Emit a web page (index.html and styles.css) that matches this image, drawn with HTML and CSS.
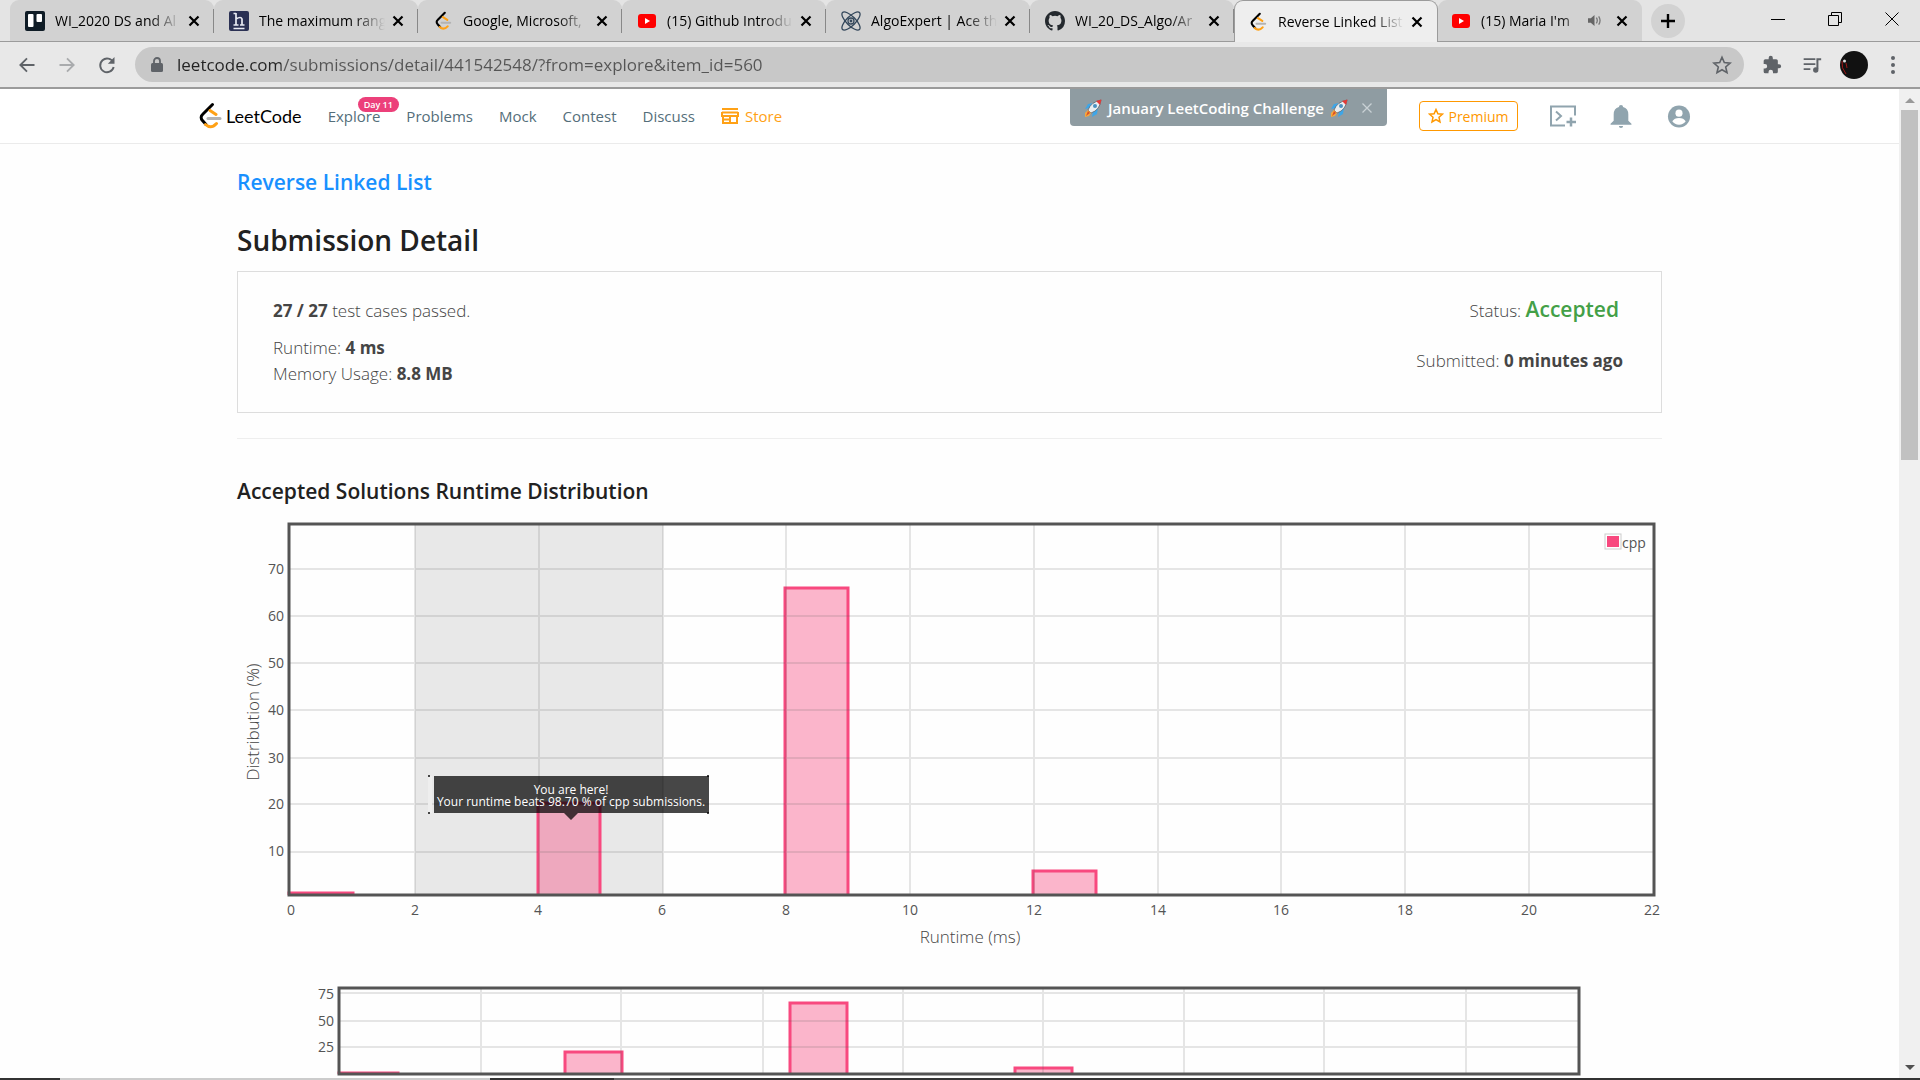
FILE: index.html
```html
<!DOCTYPE html>
<html lang="en">
<head>
<meta charset="utf-8">
<title>Reverse Linked List - Submission Detail - LeetCode</title>
<link rel="stylesheet" href="styles.css">
</head>
<body>
<svg class="defs" aria-hidden="true">
  <symbol id="x" viewBox="0 0 12 12"><path d="M1.5 1.5l9 9M10.500 1.500l-9 9" stroke="currentColor" stroke-width="2.200" fill="none"/></symbol>
  <symbol id="leet" viewBox="0 0 24 28">
    <path d="M14.500 2.500L4.500 12.500a4 4 0 0 0 0 6l3.500 4" fill="none" stroke="#000" stroke-width="3" stroke-linecap="round"/>
    <path d="M12 8.500l6 4M7.500 22.500q5.500 5 11-1" fill="none" stroke="#ffa116" stroke-width="3" stroke-linecap="round"/>
    <path d="M10 16.500h12" stroke="#b3b3b3" stroke-width="3" stroke-linecap="round"/>
  </symbol>
  <symbol id="yt" viewBox="0 0 20 20"><rect x="1" y="3" width="18" height="14" rx="3" fill="#f00"/><path d="M8 7v6l5-3z" fill="#fff"/></symbol>
  <symbol id="rocket" viewBox="0 0 20 20">
    <path d="M6 10l-4 1 3-5 5-1zM10 14l-1 5 5-3 1-6z" fill="#3ea6e8"/>
    <path d="M5 12Q8 4 18 2 17 12 8 15z" fill="#e9edf0" stroke="#5c6670" stroke-width=".8"/>
    <path d="M13 3l5.500-1.500L17 7z" fill="#e53935"/><circle cx="12" cy="8" r="2" fill="#4a90c0"/>
    <path d="M5 12l-3 3v4l4-1 2-3z" fill="#f7a83a"/><path d="M5 13l-2 5 4-3z" fill="#d84e2a"/>
  </symbol>
</svg>

<header class="browser">
  <div class="tabs">
    <div class="tab">
      <svg class="fav" viewBox="0 0 20 20"><rect width="20" height="20" rx="2" fill="#0f1c26"/><rect x="3" y="3" width="5.500" height="13" rx="1" fill="#fff"/><rect x="11.500" y="3" width="5.500" height="8" rx="1" fill="#fff"/></svg>
      <span class="tab-title">WI_2020 DS and Al</span><button class="close" aria-label="Close tab"><svg><use href="#x"/></svg></button>
    </div>
    <div class="tab">
      <svg class="fav" viewBox="0 0 20 20"><rect width="20" height="20" rx="2" fill="#2b3154"/><path d="M7 2v12M4.500 2.500H7M4.500 14h5M7 8q5-3 6 0v6M11 14h4.500M4.500 17.500h11" fill="none" stroke="#e8eaf2" stroke-width="1.700"/></svg>
      <span class="tab-title">The maximum rang</span><button class="close" aria-label="Close tab"><svg><use href="#x"/></svg></button>
    </div>
    <div class="tab">
      <svg class="fav"><use href="#leet"/></svg>
      <span class="tab-title">Google, Microsoft,</span><button class="close" aria-label="Close tab"><svg><use href="#x"/></svg></button>
    </div>
    <div class="tab">
      <svg class="fav"><use href="#yt"/></svg>
      <span class="tab-title">(15) Github Introdu</span><button class="close" aria-label="Close tab"><svg><use href="#x"/></svg></button>
    </div>
    <div class="tab">
      <svg class="fav" viewBox="0 0 20 20" fill="none" stroke="#33475b" stroke-width="1.300"><ellipse cx="10" cy="10" rx="12" ry="4.500" transform="rotate(45 10 10)"/><ellipse cx="10" cy="10" rx="12" ry="4.500" transform="rotate(-45 10 10)"/><circle cx="10" cy="10" r="3"/><circle cx="10" cy="10" r=".8"/></svg>
      <span class="tab-title">AlgoExpert | Ace th</span><button class="close" aria-label="Close tab"><svg><use href="#x"/></svg></button>
    </div>
    <div class="tab">
      <svg class="fav" viewBox="0 0 16 16"><path fill="#24292e" d="M8 0C3.580 0 0 3.580 0 8c0 3.540 2.290 6.530 5.470 7.590.4.070.55-.17.55-.38 0-.19-.01-.82-.01-1.490-2.010.37-2.530-.49-2.690-.94-.09-.23-.48-.94-.82-1.130-.28-.15-.68-.52-.01-.53.63-.01 1.080.58 1.230.82.72 1.210 1.870.87 2.330.66.070-.52.28-.87.51-1.070-1.780-.2-3.640-.89-3.640-3.950 0-.87.31-1.590.82-2.150-.08-.2-.36-1.020.08-2.120 0 0 .67-.21 2.200.82a7.600 7.600 0 0 1 4 0c1.530-1.040 2.200-.82 2.200-.82.44 1.100.16 1.920.08 2.120.51.56.82 1.270.82 2.150 0 3.070-1.870 3.750-3.650 3.950.29.25.54.73.54 1.480 0 1.070-.01 1.930-.01 2.200 0 .21.15.46.55.38A8.010 8.010 0 0 0 16 8c0-4.420-3.580-8-8-8z"/></svg>
      <span class="tab-title">WI_20_DS_Algo/Ar</span><button class="close" aria-label="Close tab"><svg><use href="#x"/></svg></button>
    </div>
    <div class="tab active">
      <svg class="fav"><use href="#leet"/></svg>
      <span class="tab-title">Reverse Linked List</span><button class="close" aria-label="Close tab"><svg><use href="#x"/></svg></button>
    </div>
    <div class="tab last">
      <svg class="fav"><use href="#yt"/></svg>
      <span class="tab-title">(15) Maria I'm</span>
      <svg class="sound" viewBox="0 0 14 14"><path d="M0 4.500h3l4-3.500v12L3 9.500H0z" fill="#666"/><path d="M9 4q2 3 0 6M11.500 2.500q3 4.500 0 9" fill="none" stroke="#777" stroke-width="1.400"/></svg>
      <button class="close" aria-label="Close tab"><svg><use href="#x"/></svg></button>
    </div>
    <button class="new-tab" aria-label="New tab"><svg viewBox="0 0 16 16"><path d="M8 1v14M1 8h14" stroke="#000" stroke-width="2.400"/></svg></button>
    <div class="window-buttons">
      <button aria-label="Minimize"><svg viewBox="0 0 14 14"><path d="M0 7.500h14" stroke="#000"/></svg></button>
      <button aria-label="Restore"><svg viewBox="0 0 14 14" fill="none" stroke="#000"><path d="M.5 3.500h10v10h-10zM3.500 3.500v-3h10v10h-3"/></svg></button>
      <button aria-label="Close"><svg viewBox="0 0 14 14"><path d="M.5.5l13 13M13.500.5l-13 13" stroke="#000"/></svg></button>
    </div>
  </div>
  <div class="toolbar">
    <button aria-label="Back"><svg viewBox="0 0 24 24"><path d="M21 12H5M12 4l-8 8 8 8" fill="none" stroke="#5f6368" stroke-width="2.200"/></svg></button>
    <button aria-label="Forward"><svg viewBox="0 0 24 24"><path d="M3 12h16M12 4l8 8-8 8" fill="none" stroke="#a9abad" stroke-width="2.200"/></svg></button>
    <button aria-label="Reload"><svg viewBox="0 0 24 24"><path d="M19.500 9A8.200 8.200 0 1 0 20 14.500" fill="none" stroke="#5f6368" stroke-width="2.300"/><path d="M21 2.500v8h-8z" fill="#5f6368"/></svg></button>
    <div class="omnibox">
      <svg class="lock" viewBox="0 0 12 16"><path d="M3 7V4a3 3 0 0 1 6 0v3" fill="none" stroke="#5f6368" stroke-width="1.800"/><rect y="6" width="12" height="9" rx="1.500" fill="#5f6368"/></svg>
      <input class="url" type="text" aria-label="Address" value="leetcode.com/submissions/detail/441542548/?from=explore&amp;item_id=560">
      <button class="bookmark" aria-label="Bookmark this page"><svg viewBox="0 0 20 20"><path d="M10 2.200l2.300 5.400 5.800.5-4.400 3.900 1.300 5.700-5-3-5 3 1.300-5.700L1.900 8.100l5.800-.5z" fill="none" stroke="#5f6368" stroke-width="1.600"/></svg></button>
    </div>
    <button class="ext" aria-label="Extensions"><svg viewBox="0 0 24 24"><path fill="#5f6368" d="M20.500 11H19V7a2 2 0 0 0-2-2h-4V3.500a2.500 2.500 0 0 0-5 0V5H4a2 2 0 0 0-2 2v3.800h1.500a2.700 2.700 0 0 1 0 5.400H2V20a2 2 0 0 0 2 2h3.800v-1.500a2.700 2.700 0 0 1 5.400 0V22H17a2 2 0 0 0 2-2v-4h1.500a2.500 2.500 0 0 0 0-5z"/></svg></button>
    <button class="ext" aria-label="Media"><svg viewBox="0 0 24 24"><path d="M2 5h14M2 11h14M2 17h8" stroke="#5f6368" stroke-width="2.200"/><path d="M18.500 17V5H23" stroke="#5f6368" stroke-width="2.400" fill="none"/><circle cx="16.500" cy="18" r="3.200" fill="#5f6368"/></svg></button>
    <button class="avatar" aria-label="Profile"><svg viewBox="0 0 28 28"><circle cx="14" cy="14" r="14" fill="#111"/><path d="M2 10q-1 7 4 13M6 12l1 5" stroke="#a01515" fill="none"/><circle cx="4.500" cy="10" r="1.500" fill="#ddd"/></svg></button>
    <button class="menu" aria-label="Menu"><svg viewBox="0 0 6 20" fill="#5f6368"><circle cx="3" cy="3" r="2"/><circle cx="3" cy="10" r="2"/><circle cx="3" cy="17" r="2"/></svg></button>
  </div>
</header>

<div class="viewport">
  <div class="page">
    <nav class="nav">
      <a class="logo" href="#"><svg><use href="#leet"/></svg>LeetCode</a>
      <a class="explore" href="#">Explore<span class="badge">Day 11</span></a>
      <a href="#">Problems</a>
      <a href="#">Mock</a>
      <a href="#">Contest</a>
      <a href="#">Discuss</a>
      <a class="store" href="#"><svg viewBox="0 0 18 16" fill="none" stroke="#ffa116" stroke-width="2"><path d="M1 1h16M1 4.500h16M1 4v4h16V4M2 8v7h14V8M2 11.500h7M9 8v7"/></svg>Store</a>
      <div class="user">
        <button class="premium"><svg viewBox="0 0 16 16"><path d="M8 1.500l1.900 4.300 4.600.4-3.500 3.100 1 4.600L8 11.500l-4 2.400 1-4.600L1.500 6.200l4.600-.4z" fill="none" stroke="#ff9800" stroke-width="1.500"/></svg>Premium</button>
        <button class="nav-icon" aria-label="Playground"><svg viewBox="0 0 26 22" fill="none" stroke="#90a4ae" stroke-width="2"><path d="M15 20H1V1h24v9M6 6l5 4.500L6 15"/><path d="M21 12v9M16.500 16.500h9.500" stroke-width="2.500"/></svg></button>
        <button class="nav-icon" aria-label="Notifications"><svg viewBox="0 0 20 22" fill="#90a4ae"><path d="M10 0a2 2 0 0 1 2 2q5 1.500 5 7v6l3 3v1H0v-1l3-3V9q0-5.500 5-7a2 2 0 0 1 2-2zM8 20h4a2 2 0 0 1-4 0z"/></svg></button>
        <button class="nav-icon" aria-label="Account"><svg viewBox="0 0 24 24"><circle cx="12" cy="12" r="11.500" fill="#90a4ae"/><circle cx="12" cy="8.500" r="3.700" fill="#fff"/><path d="M5 17q2-3.500 7-3.500t7 3.500q-2.500 3.500-7 3.500T5 17z" fill="#fff"/></svg></button>
      </div>
      <div class="banner"><svg class="rocket"><use href="#rocket"/></svg><span>January LeetCoding Challenge</span><svg class="rocket"><use href="#rocket"/></svg><button aria-label="Dismiss"><svg viewBox="0 0 12 12"><path d="M1.500 1.500l9 9M10.500 1.500l-9 9" stroke="#c9d1d5" stroke-width="1.300"/></svg></button></div>
    </nav>

    <main class="content">
      <h2 class="problem"><a href="#">Reverse Linked List</a></h2>
      <h1 class="title">Submission Detail</h1>
      <section class="summary">
        <div>
          <p class="cases"><b>27 / 27</b> test cases passed.</p>
          <p>Runtime: <b>4 ms</b></p>
          <p>Memory Usage: <b>8.8 MB</b></p>
        </div>
        <div class="right">
          <p class="status">Status: <strong>Accepted</strong></p>
          <p>Submitted: <b>0 minutes ago</b></p>
        </div>
      </section>
      <hr>
      <h3 class="chart-title">Accepted Solutions Runtime Distribution</h3>
      <svg class="chart" viewBox="0 0 1425 435" role="img" aria-label="Runtime distribution">
        <rect x="178" y="9" width="248" height="371" fill="#e8e8e8"/>
        <g class="bars">
          <path d="M52 380v-2h64v2"/><path d="M301 380v-92h62v92"/><path d="M548 380V73h63v307"/><path d="M796 380v-24h63v24"/>
        </g>
        <path class="grid" d="M178 9v371M302 9v371M426 9v371M549 9v371M673 9v371M797 9v371M921 9v371M1044 9v371M1168 9v371M1292 9v371M52 54h1364M52 101h1364M52 148h1364M52 195h1364M52 243h1364M52 289h1364M52 337h1364"/>
        <rect class="frame" x="52" y="9" width="1365" height="371"/>
        <g class="tick end">
          <text x="47" y="59">70</text><text x="47" y="106">60</text><text x="47" y="153">50</text><text x="47" y="200">40</text><text x="47" y="248">30</text><text x="47" y="294">20</text><text x="47" y="341">10</text>
        </g>
        <g class="tick mid">
          <text x="54" y="400">0</text><text x="178" y="400">2</text><text x="301" y="400">4</text><text x="425" y="400">6</text><text x="549" y="400">8</text><text x="673" y="400">10</text><text x="797" y="400">12</text><text x="921" y="400">14</text><text x="1044" y="400">16</text><text x="1168" y="400">18</text><text x="1292" y="400">20</text><text x="1415" y="400">22</text>
        </g>
        <text class="axis" x="733" y="428">Runtime (ms)</text>
        <text class="axis" transform="translate(22 207) rotate(-90)">Distribution (%)</text>
        <rect x="1368" y="19" width="16" height="15" fill="#fff" stroke="#ccc"/><rect x="1370" y="21" width="12" height="11" fill="#f8497f"/>
        <text class="tick" x="1385" y="33">cpp</text>
        <path d="M191 261h4v37h-4z" fill="#eee"/>
        <path d="M191 261h2M191 298h2M470 261h2M470 298h2" stroke="#444" stroke-width="2"/>
        <path d="M197 261h275v37H341l-7 7-7-7H197z" fill="#000" fill-opacity=".72"/>
        <g class="tip"><text x="334" y="279">You are here!</text><text x="334" y="291">Your runtime beats 98.70 % of cpp submissions.</text></g>
      </svg>
      <svg class="chart overview" viewBox="0 0 1425 110" role="img" aria-label="Runtime overview">
        <g class="bars">
          <path d="M102 99v-1h59v1"/><path d="M328 99V77h57v22"/><path d="M553 99V28h57v71"/><path d="M778 99v-6h57v6"/>
        </g>
        <path class="grid" d="M244 13v86M384 13v86M526 13v86M666 13v86M806 13v86M947 13v86M1087 13v86M1229 13v86M102 18h1240M102 46h1240M102 72h1240"/>
        <rect class="frame" x="102" y="13" width="1240" height="86"/>
        <g class="tick end"><text x="97" y="24">75</text><text x="97" y="51">50</text><text x="97" y="77">25</text></g>
      </svg>
    </main>
  </div>
  <div class="scrollbar"><i class="up"></i><div class="thumb"></div><i class="down"></i></div>
</div>
<footer class="taskbar"><div class="search"></div><div class="task"></div></footer>
</body>
</html>
```
FILE: styles.css
```css
* { box-sizing: border-box; }
body {
  margin: 0;
  height: 100vh;
  display: flex;
  flex-direction: column;
  overflow: hidden;
  background: #fefefe;
  color: #454545;
  font-family: "Open Sans", "Noto Sans", sans-serif;
  font-size: 17px;
}
button { border: 0; padding: 0; background: none; font: inherit; display: flex; align-items: center; justify-content: center; flex: none; }
a { color: inherit; text-decoration: none; }
h1, h2, h3, p { margin: 0; font-weight: 600; }
svg { display: block; flex: none; }
.defs { position: absolute; width: 0; height: 0; }

/* browser chrome */
.browser { flex: none; border-bottom: 2px solid #9b9b9b; background: #e8e8e8; }
.tabs { display: flex; align-items: center; height: 42px; padding-left: 10px; border-bottom: 1px solid #9b9b9b; background: #e4e4e4; }
.tab {
  flex: 0 1 204px;
  min-width: 0;
  height: 41px;
  display: flex;
  align-items: center;
  gap: 10px;
  padding: 0 9px 0 15px;
  border-radius: 9px 9px 0 0;
  background: linear-gradient(90deg, #888, #888) right center / 1px 24px no-repeat #d2d2d2;
  color: #000;
  font-size: 14px;
}
.tab.active { height: 42px; background: #eee; border: 1px solid #9b9b9b; border-bottom: 0; align-self: flex-start; padding-left: 13px; }
.tab.last { background: #d2d2d2; padding-left: 13px; }
.fav { width: 20px; height: 20px; }
.tab-title { flex: 1; min-width: 0; margin-right: -8px; overflow: hidden; white-space: nowrap; mask-image: linear-gradient(90deg, #000 75%, transparent); }
.close { width: 22px; height: 22px; color: #000; }
.close svg { width: 12px; height: 12px; }
.sound { width: 13px; height: 13px; }
.new-tab { width: 34px; height: 34px; margin-left: 9px; border-radius: 50%; background: #d2d2d2; }
.new-tab svg { width: 16px; height: 16px; }
.window-buttons { margin-left: auto; display: flex; align-self: flex-start; }
.window-buttons button { width: 57px; height: 37px; }
.window-buttons svg { width: 14px; height: 14px; }
.toolbar { display: flex; align-items: center; height: 45px; padding: 0 18px 0 15px; gap: 16px; }
.toolbar svg { width: 20px; height: 20px; }
.toolbar > button { width: 24px; height: 24px; }
.omnibox { flex: 1; display: flex; align-items: center; height: 35px; padding: 0 12px 0 16px; border-radius: 18px; background: #c8c8c8; }
.omnibox .lock { width: 12px; height: 16px; }
.url {
  flex: 1;
  border: 0;
  padding: 0;
  margin-left: 14px;
  font: inherit;
  color: transparent;
  background: linear-gradient(90deg, #222 104px, #555 104px) text;
}
.toolbar .avatar, .toolbar .avatar svg { width: 28px; height: 28px; }
.toolbar .menu { width: 18px; }
.toolbar .menu svg { width: 6px; }

/* page */
.viewport { flex: 1; min-height: 0; display: flex; }
.page { flex: 1; min-width: 0; overflow: hidden; }
.scrollbar { width: 21px; flex: none; display: flex; flex-direction: column; align-items: center; background: #f0f0f0; padding: 9px 0 8px; }
.scrollbar .up, .scrollbar .down { border: 5px solid transparent; }
.scrollbar .up { border-top: 0; border-bottom: 5px solid #999; }
.scrollbar .down { border-bottom: 0; border-top: 5px solid #505050; margin-top: auto; }
.thumb { width: 17px; height: 36%; margin-top: 7px; background: #c1c1c1; }

.nav {
  position: relative;
  display: flex;
  align-items: center;
  gap: 26px;
  height: 55px;
  padding: 0 207px 0 198px;
  border-bottom: 1px solid #ebebeb;
  background: #fff;
  color: #546e7a;
  font-size: 15px;
}
.logo { display: flex; align-items: center; gap: 4px; color: #000; font-size: 18px; font-family: Lato, sans-serif; }
.logo svg { width: 24px; height: 28px; }
.explore { position: relative; }
.badge { position: absolute; left: 30px; top: -9px; padding: 0 6px; border-radius: 8px; background: #ec407a; color: #fff; font-size: 9px; font-weight: 600; line-height: 15px; white-space: nowrap; }
.store { display: flex; align-items: center; gap: 6px; color: #ffa116; }
.store svg { width: 18px; height: 16px; }
.user { margin-left: auto; display: flex; align-items: center; gap: 32px; }
.premium { gap: 4px; width: 99px; height: 30px; border: 1px solid #ff9800; border-radius: 4px; color: #ff9800; font-size: 14px; }
.premium svg { width: 16px; height: 16px; }
.nav-icon svg { width: 26px; height: 23px; }
.banner { position: absolute; top: 0; right: 512px; width: 317px; height: 37px; display: flex; align-items: center; gap: 5px; padding: 0 14px 0 13px; border-radius: 0 0 4px 4px; background: #8f9ca2; color: #fff; font-size: 15px; font-weight: 600; white-space: nowrap; }
.banner .rocket { width: 20px; height: 20px; }
.banner button { margin-left: auto; }
.banner button svg { width: 12px; height: 12px; }

.content { width: 100%; max-width: 1425px; margin: 0 auto; padding-top: 20px; font-weight: 300; }
.problem { color: #1890ff; font-size: 21px; line-height: 36px; }
.title { margin-top: 20px; color: #212121; font-size: 28px; line-height: 40px; }
.summary { display: flex; justify-content: space-between; margin-top: 11px; height: 142px; padding: 26px 38px 0 35px; border: 1px solid #ddd; line-height: 26px; }
.summary p { font-weight: 300; }
.summary b { font-weight: 700; }
.summary .cases { margin-bottom: 11px; }
.right { margin-top: -2px; text-align: right; }
.right .status { padding-right: 4px; margin-bottom: 24px; }
.status strong { color: #43a047; font-size: 21px; font-weight: 600; }
.content hr { margin: 25px 0 0; border: 0; border-top: 1px solid #eee; }
.chart-title { margin-top: 34px; color: #212121; font-size: 21px; line-height: 36px; }
.chart { width: 100%; height: auto; margin-top: 6px; font-weight: 400; }
.overview { margin-top: 25px; }
.bars { fill: #f8497f; fill-opacity: .4; stroke: #f8497f; stroke-width: 3px; }
.grid { fill: none; stroke: #545454; stroke-opacity: .15; stroke-width: 2px; }
.frame { fill: none; stroke: #545454; stroke-width: 3px; }
.tick { fill: #545454; font-size: 14px; }
.end { text-anchor: end; }
.mid, .axis, .tip { text-anchor: middle; }
.axis { fill: #454545; font-size: 17px; font-weight: 300; }
.tip { fill: #fff; font-size: 12px; }

.taskbar { flex: none; display: flex; height: 2px; background: #333; }
.search { width: 430px; margin-left: 60px; background: #ccc; }
.task { width: 56px; margin-left: 124px; background: #666; }
```
